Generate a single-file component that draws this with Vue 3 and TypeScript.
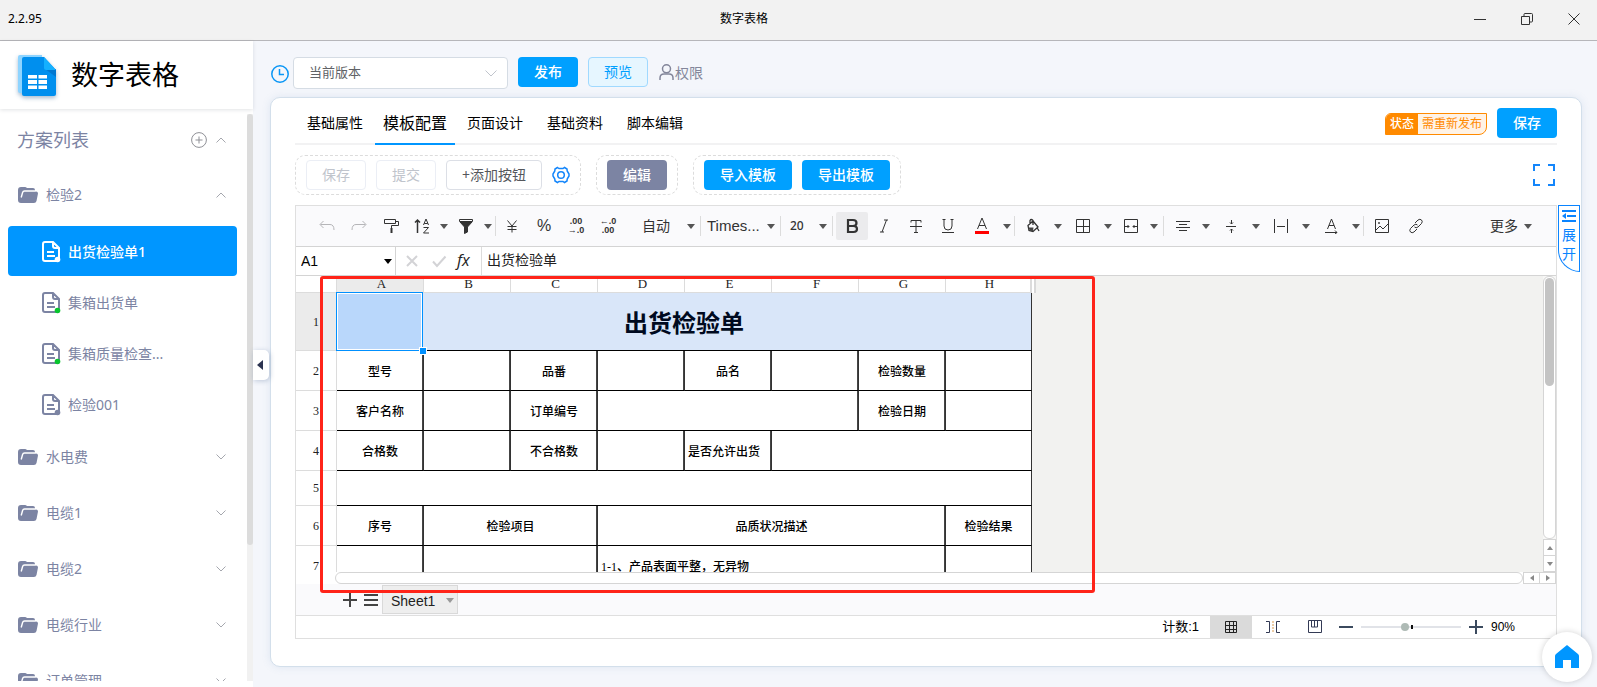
<script setup lang="ts">
import { ref } from 'vue'

interface Plan { name: string; state: 'active' | 'published' | 'draft' }
interface Tool { label: string; size: string; icon?: string; text?: string; drop?: boolean; sep?: string; pressed?: boolean; dim?: boolean }
interface Cell { text?: string; span?: number; left?: boolean; title?: boolean }
interface Row { size: string; cells: Cell[] }

const version = ref('当前版本')
const zoomLevel = ref(44)
const cellName = ref('A1')
const formula = ref('出货检验单')

const plans: Plan[] = [
  { name: '出货检验单1', state: 'active' },
  { name: '集箱出货单', state: 'published' },
  { name: '集箱质量检查...', state: 'published' },
  { name: '检验001', state: 'draft' },
]
const folders = ['水电费', '电缆1', '电缆2', '电缆行业', '订单管理']
const tabs = ['基础属性', '模板配置', '页面设计', '基础资料', '脚本编辑']

const icons: Record<string, string> = {
  undo: '<path d="M4.500 3 1 6.500 4.500 10M1.500 6.500H11q4 0 4 5.500"/>',
  redo: '<path d="M11.500 3 15 6.500 11.500 10M14.500 6.500H5q-4 0-4 5.500"/>',
  paint: '<path d="M1.500 1.500h11v4h-11zM12.500 3.500h3v4h-7v3"/><path d="M8.500 10v5" stroke-width="2"/>',
  sort: '<path d="M3.500 15V2M1 4.500 3.500 2 6 4.500" stroke-width="1.500"/><path d="M9.500 7 12 1l2.500 6M10.300 5.500h3.400M9.500 9.500h5l-5 5.500h5.500"/>',
  filter: '<path d="M1.500 1.500h13v2h-13z"/><path d="M2 4h12l-4.500 5v5l-3 1.500V9z" fill="#333"/>',
  yen: '<path d="M3.500 2.500 8 8l4.500-5.500M8 8v6.500M3.500 8.500h9M3.500 11.500h9"/>',
  bold: '<path d="M4 2h5q3.500 0 3.500 3T9 8H4zM4 8h5.500q3.500 0 3.500 3t-3.500 3H4z" stroke-width="2.200"/>',
  italic: '<path d="M8 2h4M4 14h4M10.500 2 6 14"/>',
  strike: '<path d="M3 4.500v-2h10v2M8 2.500v12M6 14.500h4M2 8.500h12"/>',
  under: '<path d="M2.500 1.500h3M10.500 1.500h3M4 1.500V8q0 4 4 4t4-4V1.500M2 14.500h12"/>',
  color: '<path d="M3.500 11 8 0l4.500 11M5 7.500h6"/><path d="M1 14.500h14" stroke="#f00" stroke-width="3"/>',
  fill: '<path d="M3 7.500 8 3l5 6-5 4.500-4-1zM5 6V2.500q1-2 3 0V7M12 9.500l2 3.500" stroke-width="1.300"/><path d="M3.500 9.500h5L8 13H5z" fill="#444" stroke="none"/>',
  border: '<path d="M1.500 1.500h13v13h-13zM8.500 1.500v13M1.500 8.500h13"/>',
  merge: '<path d="M1.500 1.500h13v13h-13zM2 8.500h4M10 8.500h4M4.500 7 6 8.500 4.500 10M11.500 7 10 8.500 11.500 10"/>',
  align: '<path d="M1 3.500h14M4 6.500h8M1 9.500h14M4 12.500h8"/>',
  valign: '<path d="M3 8.500h10M8.500 2v4M7 4.500 8.500 6 10 4.500M8.500 15v-4M7 12.500l1.500-1.500 1.500 1.500"/>',
  wrap: '<path d="M1.500 1v14M14.500 1v14M4 8.500h8"/>',
  rotate: '<path d="M4.500 11 8.500 1l4 10M6 7.500h5M2 14.500h12M12 12.500l2 2-2 1.500"/>',
  image: '<path d="M1.500 1.500h13v13h-13zM2 12l4-4 3 3 5-5"/><circle cx="5" cy="5" r="1" fill="#444" stroke="none"/>',
  link: '<path d="M7 5l3-3q2-1.500 3.500 0t0 3.500L10 9q-2 1.500-3.500 0M9 11l-3 3q-2 1.500-3.500 0t0-3.500L6 7q2-1.500 3.500 0"/>',
}

const tools: Tool[] = [
  { label: '撤销', size: 'm', icon: 'undo', dim: true },
  { label: '重做', size: 'm', icon: 'redo', dim: true },
  { label: '格式刷', size: 'm', icon: 'paint' },
  { label: '排序', size: 's', icon: 'sort', drop: true },
  { label: '筛选', size: 's', icon: 'filter', drop: true, sep: 'tight' },
  { label: '货币', size: 'm', icon: 'yen' },
  { label: '百分比', size: 'm percent', text: '%' },
  { label: '减少小数', size: 'm dec', text: '.00\n→.0' },
  { label: '增加小数', size: 'm dec', text: '←.0\n.00' },
  { label: '格式', size: 'format', text: '自动', drop: true, sep: 'loose' },
  { label: '字体', size: 'family', text: 'Times...', drop: true, sep: 'loose' },
  { label: '字号', size: 'points', text: '20', drop: true, sep: 'loose' },
  { label: '加粗', size: 'm', icon: 'bold', pressed: true },
  { label: '斜体', size: 'm', icon: 'italic' },
  { label: '删除线', size: 'm', icon: 'strike' },
  { label: '下划线', size: 'm', icon: 'under' },
  { label: '字体颜色', size: 'l', icon: 'color', drop: true, sep: 'tight' },
  { label: '填充', size: 'l', icon: 'fill', drop: true },
  { label: '边框', size: 'l', icon: 'border', drop: true },
  { label: '合并', size: 'm', icon: 'merge', drop: true, sep: 'loose' },
  { label: '水平对齐', size: 'm', icon: 'align', drop: true },
  { label: '垂直对齐', size: 'l', icon: 'valign', drop: true },
  { label: '换行', size: 'l', icon: 'wrap', drop: true },
  { label: '旋转', size: 'l', icon: 'rotate', drop: true, sep: 'tight' },
  { label: '图片', size: 'l', icon: 'image' },
  { label: '链接', size: 'm', icon: 'link' },
]

const cols = ['A', 'B', 'C', 'D', 'E', 'F', 'G', 'H']
const rows: Row[] = [
  { size: 'tall', cells: [{ text: '出货检验单', span: 8, title: true }] },
  { size: 'mid', cells: [{ text: '型号' }, {}, { text: '品番' }, {}, { text: '品名' }, {}, { text: '检验数量' }, {}] },
  { size: 'mid', cells: [{ text: '客户名称' }, {}, { text: '订单编号' }, { span: 3 }, { text: '检验日期' }, {}] },
  { size: 'mid', cells: [{ text: '合格数' }, {}, { text: '不合格数' }, {}, { text: '是否允许出货', left: true }, { span: 3 }] },
  { size: 'low', cells: [{ span: 8 }] },
  { size: 'mid', cells: [{ text: '序号' }, { text: '检验项目', span: 2 }, { text: '品质状况描述', span: 4 }, { text: '检验结果' }] },
  { size: 'mid', cells: [{}, { span: 2 }, { text: '1-1、产品表面平整，无异物', span: 4, left: true }, {}] },
]
</script>

<template>
  <div class="app">
    <header class="titlebar">
      <span class="ver">2.2.95</span>
      <span class="wtitle">数字表格</span>
      <button class="wbtn" aria-label="最小化"><svg width="12" height="12"><path d="M0 6.500h12" /></svg></button>
      <button class="wbtn" aria-label="还原"><svg width="12" height="12"><path d="M.5 3.500h8v8h-8zM3 3V1.500q0-1 1-1h6.500q1 0 1 1V8q0 1-1 1H9" /></svg></button>
      <button class="wbtn" aria-label="关闭"><svg width="12" height="12"><path d="M.5.500l11 11M11.500.500l-11 11" /></svg></button>
    </header>

    <div class="body">
      <aside class="side">
        <div class="brand">
          <svg class="logo" width="38" height="41" viewBox="0 0 38 41">
            <path d="M2 0h22v38H2q-2 0-2-2V2q0-2 2-2z" fill="#8ed4ff" />
            <path d="M6 2h20l12 13v24q0 2-2 2H6q-2 0-2-2V4q0-2 2-2z" fill="#008fee" />
            <path d="M27 14h11v8z" fill="#0077d0" />
            <path d="M26 2l12 13H28q-2 0-2-2z" fill="#14b0ff" />
            <g fill="#fff"><path d="M10 20h9v3.500h-9zM20.500 20H29v3.500h-8.500zM10 25h9v4h-9zM20.500 25H29v4h-8.500zM10 30.500h9V34h-9zM20.500 30.500H29V34h-8.500z" /></g>
          </svg>
          <h1>数字表格</h1>
        </div>
        <nav class="scroll">
          <div class="tree">
            <div class="row head">
              <span class="grow">方案列表</span>
              <button class="bare plus" aria-label="新增方案">
                <svg width="16" height="16" viewBox="0 0 16 16"><circle cx="8" cy="8" r="7.400" /><path d="M8 4.500v7M4.500 8h7" /></svg>
              </button>
              <svg class="chev" width="10" height="6"><path d="M.5 5.500 5 1l4.500 4.500" /></svg>
            </div>
            <div class="row">
              <svg class="folder" width="20" height="16" viewBox="0 0 20 16"><path d="M3 0h4q1 0 2 1h6q2 0 2 2v1.500h1q2 0 2 2L18.500 14q-.5 2-2.500 2H3q-3 0-3-3V3q0-3 3-3z" /><path class="gleam" d="M3.200 10.500 4.600 5.500Q5 4 6.500 4H17.500" /></svg>
              <span class="grow">检验2</span>
              <svg class="chev" width="10" height="6"><path d="M.5 5.500 5 1l4.500 4.500" /></svg>
            </div>
            <div class="plans">
              <a v-for="p in plans" :key="p.name" href="#" class="plan" :class="p.state">
                <svg width="20" height="22" viewBox="0 0 20 22">
                  <path d="M11 1H3Q1 1 1 3v15q0 2 2 2h12q2 0 2-2V7zM11 1v4q0 2 2 2h4M5 11h7M5 15h8" />
                  <circle cx="15.500" cy="18.500" r="2.800" />
                </svg>
                <span>{{ p.name }}</span>
              </a>
            </div>
            <div v-for="f in folders" :key="f" class="row">
              <svg class="folder" width="20" height="16" viewBox="0 0 20 16"><path d="M3 0h4q1 0 2 1h6q2 0 2 2v1.500h1q2 0 2 2L18.500 14q-.5 2-2.500 2H3q-3 0-3-3V3q0-3 3-3z" /><path class="gleam" d="M3.200 10.500 4.600 5.500Q5 4 6.500 4H17.500" /></svg>
              <span class="grow">{{ f }}</span>
              <svg class="chev" width="10" height="6"><path d="M.5.500 5 5 9.500.500" /></svg>
            </div>
          </div>
          <div class="sbar"><div class="sthumb"></div></div>
        </nav>
        <button class="handle" aria-label="收起侧栏"><svg width="6" height="10"><path d="M6 0v10L0 5z" /></svg></button>
      </aside>

      <main class="main">
        <div class="top">
          <svg class="clock" width="18" height="18" viewBox="0 0 18 18"><circle cx="9" cy="9" r="8.200" /><path d="M8.500 4v5.500H13" /></svg>
          <div class="pick">
            <select v-model="version" aria-label="版本"><option>当前版本</option></select>
            <svg width="12" height="7"><path d="M.5.500 6 6 11.500.500" /></svg>
          </div>
          <button class="btn primary">发布</button>
          <button class="btn plain">预览</button>
          <button class="bare perm">
            <svg width="15" height="16" viewBox="0 0 15 16"><circle cx="7.500" cy="4.800" r="4" /><path d="M1 16v-2q0-4 4-4h5q4 0 4 4v2" /></svg>
            <span>权限</span>
          </button>
        </div>

        <section class="card">
          <div class="tabs">
            <button v-for="(t, i) in tabs" :key="t" class="tab" :class="{ cur: i === 1 }">{{ t }}</button>
            <span class="status"><b>状态</b><span>需重新发布</span></span>
            <button class="btn primary">保存</button>
          </div>

          <div class="actions">
            <div class="group">
              <button class="btn muted" disabled>保存</button>
              <button class="btn muted" disabled>提交</button>
              <button class="btn line">+添加按钮</button>
              <button class="bare gear" aria-label="设置">
                <svg width="18" height="18" viewBox="0 0 18 18"><path d="M5.500 1.500 7 2.500h4l1.500-1L15 3l.2 2L17 8v2l-1.800 3-.2 2-2.500 1.500-1.500-1H7l-1.500 1L3 15l-.2-2L1 10V8l1.800-3L3 3z" /><circle cx="9" cy="9" r="3.300" /></svg>
              </button>
            </div>
            <div class="group"><button class="btn slate">编辑</button></div>
            <div class="group">
              <button class="btn primary wide">导入模板</button>
              <button class="btn primary wide">导出模板</button>
            </div>
            <button class="bare full" aria-label="全屏"><svg width="22" height="22"><path d="M1 7V1h6M15 1h6v6M21 15v6h-6M7 21H1v-6" /></svg></button>
          </div>

          <div class="sheetwrap">
            <div class="sheet">
              <div class="toolbar">
                <template v-for="t in tools" :key="t.label">
                  <button class="tool" :class="[t.size, { pressed: t.pressed, dim: t.dim }]" :aria-label="t.label">
                    <svg v-if="t.icon" width="16" height="16" viewBox="0 0 16 16" v-html="icons[t.icon]"></svg>
                    <span v-else>{{ t.text }}</span>
                  </button>
                  <button v-if="t.drop" class="drop" :aria-label="t.label + '选项'"><i></i></button>
                  <span v-if="t.sep" class="sep" :class="t.sep"></span>
                </template>
                <button class="more">更多<i></i></button>
              </div>

              <div class="fbar">
                <input v-model="cellName" class="cname" aria-label="单元格" />
                <button class="fdrop" aria-label="选择单元格"><i></i></button>
                <svg class="fx" width="48" height="16" viewBox="0 0 48 16"><path d="M1 3l10 10M11 3 1 13M27 8.500l4 4.500 8.500-9.500" /></svg>
                <em>fx</em>
                <input v-model="formula" class="formula" aria-label="公式" />
              </div>

              <div class="gridrow">
                <div class="view">
                  <table>
                    <colgroup><col class="c0" /><col v-for="n in 7" :key="n" class="cn" /><col class="cz" /></colgroup>
                    <thead>
                      <tr><th></th><th v-for="c in cols" :key="c" :class="{ sel: c === 'A' }">{{ c }}</th></tr>
                    </thead>
                    <tbody>
                      <tr v-for="(r, i) in rows" :key="i" :class="r.size">
                        <th :class="{ sel: i === 0 }">{{ i + 1 }}</th>
                        <td v-for="(c, j) in r.cells" :key="j" :colspan="c.span || 1" :class="{ title: c.title, left: c.left }">
                          {{ c.text }}<span v-if="c.title" class="cursor"><i></i></span>
                        </td>
                      </tr>
                    </tbody>
                  </table>
                </div>
                <div class="vbar">
                  <div class="vtrack"><div class="vthumb"></div></div>
                  <button aria-label="向上"><i class="up"></i></button>
                  <button aria-label="向下"><i class="down"></i></button>
                </div>
              </div>
              <div class="hbar">
                <div class="htrack"></div>
                <button aria-label="向左"><i class="lt"></i></button>
                <button aria-label="向右"><i class="rt"></i></button>
              </div>

              <div class="sheets">
                <button class="bare" aria-label="新建工作表"><svg width="14" height="14"><path d="M7 0v14M0 7h14" /></svg></button>
                <button class="bare" aria-label="全部工作表"><svg width="14" height="14"><path d="M0 2h14M0 7h14M0 12h14" /></svg></button>
                <button class="stab">Sheet1<i></i></button>
              </div>

              <div class="foot">
                <span class="count">计数:1</span>
                <button class="mode cur" aria-label="普通视图"><svg width="14" height="14"><path d="M1.500 1.500h11v11h-11zM1 5.500h12M1 9.500h12M5.500 1v12M9.500 1v12" /></svg></button>
                <button class="mode" aria-label="分页视图"><svg width="14" height="14"><path d="M0 1.500h3.500v11H0M14 1.500h-3.500v11H14" /><path d="M7 1v12" stroke-dasharray="2 1" stroke="#d99a4e" /></svg></button>
                <button class="mode" aria-label="页面视图"><svg width="14" height="14"><path d="M.5.500h13v12H.5zM3.500 1v6h6V1M6.500 1v6" /></svg></button>
                <button class="bare step" aria-label="缩小"><svg width="14" height="14"><path d="M0 7h14" /></svg></button>
                <input v-model="zoomLevel" type="range" class="range" aria-label="缩放" />
                <button class="bare step" aria-label="放大"><svg width="14" height="14"><path d="M0 7h14M7 0v14" /></svg></button>
                <span class="pct">90%</span>
              </div>
              <div class="mark"></div>
            </div>
            <button class="expand">
              <svg width="14" height="12"><path d="M0 1h14M5 6h9M0 11h14" /><path d="M4 3v6L0 6z" class="solid" /></svg>
              <span>展开</span>
            </button>
          </div>
        </section>
      </main>
    </div>
    <a href="#" class="home" aria-label="首页"><svg width="24" height="24" viewBox="0 0 24 24"><path d="M12 0l11 9q1 1 1 2v12h-8v-8H8v8H0V11q0-1 1-2z" /></svg></a>
  </div>
</template>

<style>
html, body { margin: 0; overflow: hidden; }
</style>

<style scoped>
* { box-sizing: border-box; }
.app {
  height: 100vh; display: flex; flex-direction: column; overflow: hidden; background: #f4f6fb;
  font-family: "Noto Sans", "Noto Sans CJK SC", sans-serif; font-size: 14px; line-height: 20px; color: #000;
}
button, input, select { font: inherit; margin: 0; padding: 0; border: 0; background: none; color: inherit; white-space: nowrap; }
svg { fill: none; stroke: currentColor; flex: none; display: block; }
a { text-decoration: none; color: inherit; }
i { display: block; width: 0; height: 0; border: 4px solid transparent; border-top: 5px solid #555; border-bottom: 0; }

.titlebar { flex: none; height: 41px; background: #f2f2f2; border-bottom: 1px solid #b6b6ba; display: flex; align-items: center; font-size: 12px; padding-bottom: 3px; }
.ver { padding-left: 8px; }
.wtitle { flex: 1; text-align: center; padding-right: 10px; }
.wbtn { width: 47px; height: 36px; display: flex; align-items: center; justify-content: center; color: #333; }

.body { flex: 1; display: flex; min-height: 0; }
.side { position: relative; z-index: 2; width: 253px; flex: none; background: #fff; display: flex; flex-direction: column; padding-bottom: 6px; }
.brand { position: relative; height: 68px; flex: none; display: flex; align-items: center; padding-left: 18px; gap: 15px; box-shadow: 0 1px 4px rgba(0, 21, 41, .12); }
.logo { stroke: none; filter: drop-shadow(0 2px 2px rgba(0, 60, 120, .35)); }
h1 { margin: 0; font-size: 27px; font-weight: 400; line-height: 40px; }
.scroll { flex: 1; min-height: 0; display: flex; overflow: hidden; }
.tree { flex: 1; color: #7c84a3; padding-top: 2px; }
.row { height: 56px; display: flex; align-items: center; padding: 0 21px 0 18px; gap: 8px; }
.head { font-size: 18px; padding-left: 17px; padding-top: 2px; }
.grow { flex: 1; }
.plus { color: #8f9096; margin-right: 1px; }
.chev { color: #a5a7ae; }
.folder { fill: #7c84a3; stroke: none; }
.folder .gleam { fill: none; stroke: #fff; stroke-width: 1.400px; }
.plans { padding: 3px 10px 0 8px; height: 206px; display: grid; gap: 1px; grid-template-rows: repeat(4, 50px); }
.plan { display: flex; align-items: center; gap: 6px; padding: 2px 0 0 34px; border-radius: 4px; }
.plan path { stroke-width: 2px; }
.plan circle { fill: #7c84a3; stroke: none; }
.plan.published circle { fill: #08c52e; }
.plan.active { background: #0096ff; color: #fff; font-weight: 500; }
.plan.active circle { fill: #fff; }
.sbar { width: 6px; margin-top: 5px; background: #f1f1f1; }
.sthumb { height: 76%; background: #dcdcdc; border-radius: 3px; }
.handle { position: absolute; left: 253px; top: 309px; width: 16px; height: 30px; background: #fff; border-radius: 0 5px 5px 0; box-shadow: 1px 1px 5px rgba(60, 90, 140, .3); display: flex; align-items: center; padding-left: 4px; }
.handle svg { fill: #2b3350; stroke: none; }

.main { flex: 1; min-width: 0; display: flex; flex-direction: column; padding: 16px 15px 20px 17px; }
.top { height: 40px; flex: none; display: flex; align-items: flex-start; padding-left: 1px; }
.clock { margin: 8px 4px 0 0; color: #0a96f5; stroke-width: 1.500px; }
.pick { position: relative; display: flex; align-items: center; margin-right: 10px; }
.pick select { appearance: none; width: 215px; height: 32px; border: 1px solid #d5dce4; border-radius: 4px; background: #fff; padding: 0 15px 2px; font-size: 13px; color: #606266; }
.pick svg { position: absolute; right: 11px; color: #c0c4cc; pointer-events: none; }
.btn { width: 60px; height: 30px; border-radius: 4px; text-align: center; border: 1px solid transparent; }
.primary { background: #00a0ff; color: #fff; font-weight: 500; }
.plain { margin-left: 10px; border-color: #a0d9ff; background: #e6f6ff; color: #00a0ff; }
.muted { border-color: #ebeef5; color: #c0c4cc; background: #fff; }
.line { width: 96px; border-color: #dcdfe6; color: #55575c; background: #fff; }
.slate { background: #7c84a3; color: #fff; font-weight: 500; }
.wide { width: 88px; }
.bare { display: flex; align-items: center; }
.perm { margin: 5px 0 0 11px; gap: 1px; color: #83869a; height: 22px; }
.perm svg { stroke-width: 1.500px; margin-bottom: 3px; }

.card { flex: 1; min-height: 0; display: flex; flex-direction: column; background: #fff; border: 1px solid #d3dfeb; border-radius: 10px; padding: 10px 0 27px 24px; box-shadow: 0 0 8px rgba(100, 140, 190, .15); }
.tabs { height: 37px; flex: none; margin-right: 24px; border-bottom: 2px solid #f2f2f3; display: flex; align-items: flex-start; }
.tab { width: 80px; height: 37px; padding-bottom: 5px; border-bottom: 2px solid transparent; }
.cur.tab { font-size: 16px; border-color: #0096ff; }
.status { margin: 5px 10px 0 auto; height: 22px; display: flex; border: 1px solid #ff8a00; border-radius: 6px 0 8px 0; font-size: 12px; color: #ff8a00; background: #fff3e6; overflow: hidden; }
.status b { background: #ff8a00; color: #fff; font-weight: 500; padding: 0 4px; }
.status span { padding: 0 4px; }
.actions { flex: none; display: flex; gap: 15px; margin: 10px 26px 10px 0; align-items: center; }
.group { display: flex; gap: 10px; height: 40px; padding: 0 10px; align-items: center; border: 1px dashed #dcdcdc; border-radius: 10px; }
.gear { color: #1486fb; }
.gear svg { stroke-width: 1.500px; }
.full { margin-left: auto; color: #1486fb; }
.full svg { stroke-width: 2px; }

.sheetwrap { flex: 1; min-height: 0; display: flex; align-items: flex-start; }
.sheet { position: relative; flex: 1; min-width: 0; align-self: stretch; border: 1px solid #dfdfdf; display: flex; flex-direction: column; }
.toolbar { height: 41px; flex: none; background: #fafafc; border-bottom: 1px solid #d4d4d4; display: flex; align-items: center; padding-left: 15px; color: #333; }
.tool { height: 28px; display: flex; align-items: center; justify-content: center; }
.m { width: 32px; }
.s { width: 30px; }
.l { width: 36px; }
.pressed { background: #ebebed; border-radius: 2px; }
.dim { color: #b5b5b8; }
.dec { font: 700 9px/9px "Liberation Sans", sans-serif; white-space: pre; }
.percent { font: 16px/20px "Liberation Sans", sans-serif; }
.format, .family { width: 60px; justify-content: flex-start; padding-left: 18px; }
.family { padding-left: 3px; font: 15px/20px "Liberation Sans", sans-serif; }
.points { width: 32px; justify-content: flex-start; padding-left: 6px; font: 500 12px/20px "Noto Sans", sans-serif; }
.drop { width: 14px; height: 28px; display: flex; align-items: center; justify-content: center; }
.sep { width: 1px; height: 20px; background: #dcdcdc; }
.loose { margin: 0 3px 0 2px; }
.more { margin: 0 24px 0 auto; display: flex; align-items: center; gap: 6px; }
.fbar { height: 29px; flex: none; border-bottom: 1px solid #d4d4d4; display: flex; align-items: stretch; }
.cname { width: 84px; padding-left: 5px; font-family: "Liberation Sans", sans-serif; }
.fdrop { width: 16px; border-right: 1px solid #d4d4d4; display: flex; align-items: center; justify-content: center; }
.fdrop i { border-top-color: #000; }
.fx { align-self: center; margin-left: 10px; color: #d3d3d6; stroke-width: 2px; }
.fbar em { width: 27px; padding-left: 3px; font: italic 16px/26px "Open Sans", sans-serif; color: #222; }
.formula { flex: 1; min-width: 0; border-left: 1px solid #dcdcdc; padding: 0 5px 3px; color: #222; }

.gridrow { flex: 1; min-height: 0; display: flex; background: #f2f2f0; }
.view { flex: 1; min-width: 0; overflow: hidden; }
table { table-layout: fixed; border-collapse: separate; border-spacing: 0; width: 736px; font-family: "Liberation Serif", "Noto Sans CJK SC", serif; font-size: 12px; line-height: 16px; background: #fff; }
.c0 { width: 41px; }
.cn { width: 87px; }
.cz { width: 86px; }
th { padding: 0; font-weight: 400; color: #222; border-right: 1px solid #dcdcdc; border-bottom: 1px solid #dcdcdc; background: #fff; }
thead th { height: 17px; line-height: 14px; font-size: 13px; padding: 0 0 1px 3px; }
thead th:last-child { border-right: 2px solid #dcdcdc; box-shadow: 2px 0 0 #fff, 4px 0 0 #d9d9d9; }
th.sel { background: #ebebeb; }
td { position: relative; padding: 2px 0 0; text-align: center; border-right: 1px solid #333; border-bottom: 1px solid #000; font-weight: 500; box-shadow: inset -1px 0 #444; }
td:last-child { box-shadow: none; }
td.left { text-align: left; padding-left: 3px; }
td.title { background: #d9e6f9; font-size: 24px; font-weight: 700; color: #000a20; padding-top: 4px; }
.tall { height: 58px; }
.mid { height: 40px; }
.low { height: 35px; }
.cursor { position: absolute; left: -1px; top: -1px; width: 87px; height: 59px; border: 1px solid #0090ff; background: #b9d7fb; box-shadow: inset 0 0 0 1px #fff; z-index: 1; }
.cursor i { position: absolute; right: -5px; bottom: -5px; width: 8px; height: 8px; border: 1px solid #fff; background: #0090ff; }

.vbar { width: 13px; flex: none; display: flex; flex-direction: column; background: #f7f7f6; }
.vtrack { flex: 1; border: 1px solid #d5d5d5; border-radius: 6px; background: #fff; padding: 1px; }
.vthumb { height: 108px; background: #c4c4c4; border-radius: 5px; }
.vbar button, .hbar button { border: 1px solid #d5d5d5; background: #fff; display: flex; align-items: center; justify-content: center; }
.vbar button { height: 17px; }
.vbar button + button { height: 16px; border-top: 0; }
.hbar { height: 12px; flex: none; display: flex; padding-left: 39px; background: #fff; }
.htrack { flex: 1; border: 1px solid #d5d5d5; border-radius: 6px; background: #fff; }
.hbar button { width: 17px; }
.hbar button + button { width: 16px; border-left: 0; }
.up, .down, .lt, .rt { border: 3px solid transparent; }
.up { border-top: 0; border-bottom: 4px solid #888; }
.down { border-bottom: 0; border-top: 4px solid #888; }
.lt { border-left: 0; border-right: 4px solid #888; }
.rt { border-right: 0; border-left: 4px solid #888; }

.sheets { height: 31px; flex: none; background: #fafafc; display: flex; align-items: center; padding-left: 47px; gap: 7px; color: #444; }
.sheets svg { stroke-width: 2px; }
.stab { width: 76px; height: 29px; margin-left: -3px; background: #eee; border: 1px solid #d9d9d9; display: flex; align-items: center; justify-content: space-between; padding: 2px 3px 0 8px; font: 14px/20px "Liberation Sans", sans-serif; color: #222; }
.stab i { border-top-color: #999; }
.foot { height: 23px; flex: none; border-top: 1px solid #dfdfdf; display: flex; align-items: center; justify-content: flex-end; padding-right: 41px; }
.count { font: 13px/20px "Liberation Sans", "Noto Sans CJK SC", sans-serif; margin-right: 11px; }
.mode { width: 42px; height: 22px; display: flex; align-items: center; justify-content: center; color: #333a55; }
.mode.cur { background: #dadada; color: #222; }
.step { color: #3b4a5e; }
.step svg { stroke-width: 2px; }
.range { appearance: none; width: 100px; height: 10px; margin: 0 8px; background: linear-gradient(#111, #111) 50px 50% / 2px 4px no-repeat, linear-gradient(#e1e3e8, #e1e3e8) 0 50% / 100% 2px no-repeat; }
.range::-webkit-slider-thumb { appearance: none; width: 8px; height: 8px; border-radius: 50%; background: #aebab5; }
.pct { font: 12px/20px "Liberation Sans", sans-serif; margin-left: 8px; }
.foot .mode + .step { margin-left: 3px; }

.mark { position: absolute; left: 24px; top: 70px; width: 775px; height: 317px; border: 3px solid #ff2419; border-radius: 3px; pointer-events: none; z-index: 3; }

.expand { width: 22px; height: 67px; margin: 0 1px; border: 1px solid #0a84ff; border-radius: 0 0 0 22px; color: #0a84ff; display: flex; flex-direction: column; align-items: center; padding-top: 4px; background: #fff; }
.expand svg { stroke-width: 2px; }
.expand .solid { fill: #0a84ff; stroke: none; }
.expand span { width: 14px; white-space: normal; line-height: 19px; margin-top: 3px; }

.home { position: fixed; right: 5px; bottom: 5px; width: 50px; height: 50px; border-radius: 50%; background: #fff; box-shadow: 0 0 6px rgba(0, 0, 0, .18); display: flex; align-items: center; justify-content: center; z-index: 5; }
.home svg { fill: #0096ff; stroke: none; }
</style>
